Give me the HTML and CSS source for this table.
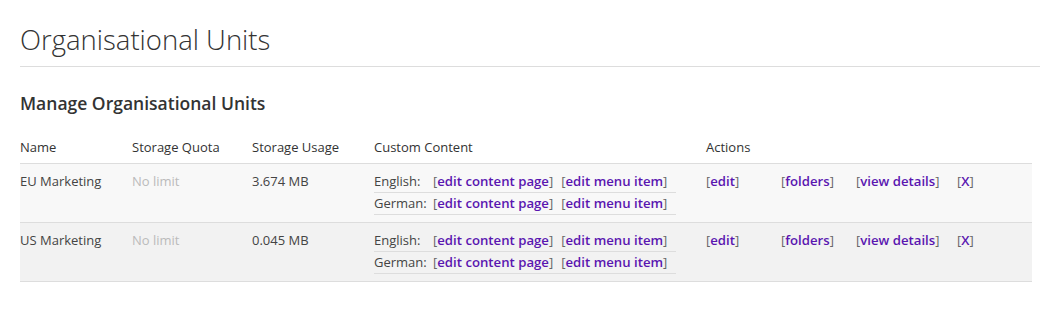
FILE: index.html
```html
<!DOCTYPE html>
<html lang="en">
<head>
<meta charset="utf-8">
<title>Organisational Units</title>
<link rel="stylesheet" href="styles.css">
</head>
<body>
<div class="page">
  <h1 class="title">Organisational Units</h1>
  <div class="content">
    <h2 class="subtitle">Manage Organisational Units</h2>
    <table class="units">
      <thead>
        <tr>
          <th class="c-name">Name</th>
          <th class="c-quota">Storage Quota</th>
          <th class="c-usage">Storage Usage</th>
          <th class="c-custom">Custom Content</th>
          <th class="c-actions">Actions</th>
        </tr>
      </thead>
      <tbody>
        <tr class="odd">
          <td>EU Marketing</td>
          <td class="muted">No limit</td>
          <td>3.674 MB</td>
          <td>
            <div class="langs">
              <div class="lang"><span class="lang-name">English:</span><span class="br">[<a href="#">edit content page</a>]</span><span class="br">[<a href="#">edit menu item</a>]</span></div>
              <div class="lang"><span class="lang-name">German:</span><span class="br">[<a href="#">edit content page</a>]</span><span class="br">[<a href="#">edit menu item</a>]</span></div>
            </div>
          </td>
          <td>
            <div class="actions">
              <span class="br">[<a href="#">edit</a>]</span>
              <span class="br">[<a href="#">folders</a>]</span>
              <span class="br">[<a href="#">view details</a>]</span>
              <span class="br">[<a href="#">X</a>]</span>
            </div>
          </td>
        </tr>
        <tr class="even">
          <td>US Marketing</td>
          <td class="muted">No limit</td>
          <td>0.045 MB</td>
          <td>
            <div class="langs">
              <div class="lang"><span class="lang-name">English:</span><span class="br">[<a href="#">edit content page</a>]</span><span class="br">[<a href="#">edit menu item</a>]</span></div>
              <div class="lang"><span class="lang-name">German:</span><span class="br">[<a href="#">edit content page</a>]</span><span class="br">[<a href="#">edit menu item</a>]</span></div>
            </div>
          </td>
          <td>
            <div class="actions">
              <span class="br">[<a href="#">edit</a>]</span>
              <span class="br">[<a href="#">folders</a>]</span>
              <span class="br">[<a href="#">view details</a>]</span>
              <span class="br">[<a href="#">X</a>]</span>
            </div>
          </td>
        </tr>
      </tbody>
    </table>
  </div>
</div>
</body>
</html>
```

FILE: styles.css
```css
html, body {
  margin: 0;
  padding: 0;
  background: #fff;
}
body {
  font-family: "Open Sans", "DejaVu Sans", sans-serif;
  color: #444;
  font-size: 13px;
}
.page {
  padding: 22px 0 0 20px;
}
.title {
  margin: 0;
  padding: 0 0 8px 0;
  font-size: 27.5px;
  font-weight: 300;
  line-height: 36px;
  color: #333;
  border-bottom: 1px solid #ddd;
}
.content {
  padding-right: 8px;
}
.subtitle {
  margin: 24px 0 18px 0;
  font-size: 17.5px;
  font-weight: 600;
  line-height: 24px;
  color: #333;
}
.units {
  width: 100%;
  border-collapse: collapse;
}
.units th {
  text-align: left;
  font-weight: 500;
  color: #333;
  padding: 5px 0 7px 0;
  border-bottom: 1px solid #ddd;
  font-size: 13px;
  line-height: 18px;
}
.units td {
  vertical-align: top;
  padding: 7px 0 7px 0;
  border-bottom: 1px solid #ddd;
  line-height: 21px;
}
.c-name { width: 112px; }
.c-quota { width: 120px; }
.c-usage { width: 122px; }
.c-custom { width: 332px; }
.odd td { background: #f8f8f8; }
.even td { background: #f2f2f2; }
.muted { color: #bbb; }
.langs {
  width: 302px;
}
.lang {
  display: flex;
  border-bottom: 1px solid #ddd;
  height: 21px;
  line-height: 21px;
}
.lang-name {
  width: 59px;
}
.br {
  color: #666;
  margin-right: 8px;
}
a {
  color: #5a16b0;
  text-decoration: none;
  font-weight: 600;
  font-size: 13.2px;
}
.actions {
  display: grid;
  grid-template-columns: 75px 75px 101px auto;
}
```
